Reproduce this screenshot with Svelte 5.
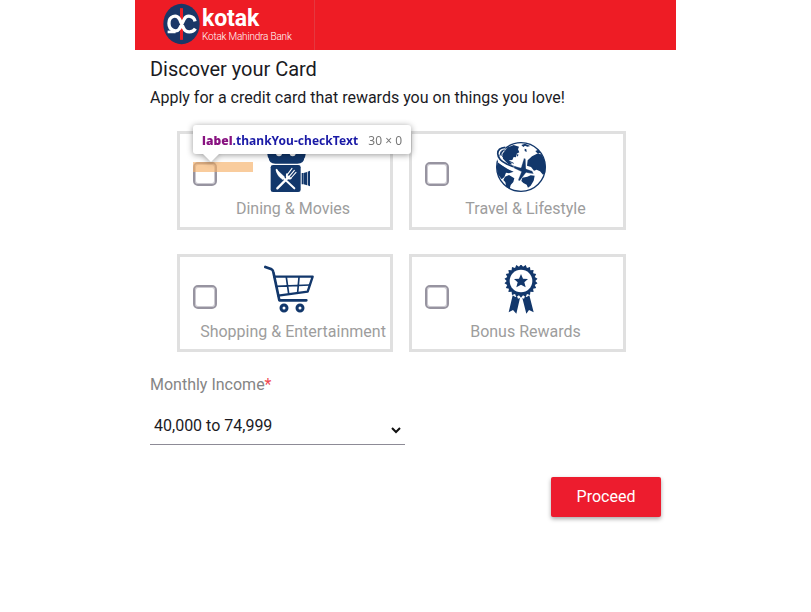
<script>
  const cards = [
    { id: 'dining', label: 'Dining & Movies' },
    { id: 'travel', label: 'Travel & Lifestyle' },
    { id: 'shopping', label: 'Shopping & Entertainment' },
    { id: 'bonus', label: 'Bonus Rewards' }
  ];
  // Scalloped edge of the rosette
  const rosette = Array.from({ length: 44 }, (_, i) => {
    const r = i % 2 ? 43 : 50;
    const a = (i * Math.PI) / 22 - Math.PI / 2;
    return `${(75 + r * Math.cos(a)).toFixed(1)},${(48 + r * Math.sin(a)).toFixed(1)}`;
  }).join(' ');
</script>

<div class="page">
  <header>
    <div class="brand">
      <svg class="mark" viewBox="0 0 112 124">
        <ellipse cx="56" cy="62" rx="55" ry="61" fill="#1b3767" />
        <path d="M56 14V110" stroke="#ed1c24" stroke-width="9" />
        <g fill="none" stroke="#fff" stroke-width="10">
          <path d="M97 54C94 36 71 33 64 48L50 76C41 89 18 82 18 60C18 37 41 32 50 47L62 74C69 91 91 88 98 76" />
          <path d="M14 86H38" stroke-width="8" />
        </g>
      </svg>
      <div class="names">
        <span class="name">kotak</span>
        <span class="bank">Kotak Mahindra Bank</span>
      </div>
    </div>
  </header>

  <main>
    <h1>Discover your Card</h1>
    <p class="intro">Apply for a credit card that rewards you on things you love!</p>

    <div class="cards">
      {#each cards as card (card.id)}
        <div class="card">
          <div class="row">
            <span class="check"></span>
            <svg class="icon" viewBox="0 0 150 150" fill="#12376b">
              {#if card.id === 'dining'}
                <circle cx="37" cy="36" r="27" />
                <circle cx="98" cy="36" r="27" />
                <path d="M14 34H121V45Q121 65 100 65H34Q14 65 14 45Z" />
                <circle cx="45" cy="34" r="9" fill="#fff" />
                <circle cx="86" cy="34" r="9" fill="#fff" />
                <rect x="20" y="69" width="90" height="81" rx="7" />
                <path d="M113 93h5v34h-5zM119 93L129 90V130L119 127ZM131 89L138 86V133L131 130Z" />
                <g stroke="#fff" fill="none" stroke-linecap="round">
                  <path d="M38 84C42 96 50 102 58 108L91 139" stroke-width="6" />
                  <path d="M37 82L62 105L56 113C44 105 36 94 37 82Z" fill="#fff" stroke-width="1" />
                  <path d="M40 139L75 104" stroke-width="7" />
                  <path d="M70 98L84 79M76 103L91 85M81 108L96 91" stroke-width="3.2" />
                  <path d="M69 97Q66 112 80 109" stroke-width="6" />
                </g>
              {:else if card.id === 'travel'}
                <circle cx="75" cy="75" r="73" fill="#fff" stroke="#12376b" stroke-width="4" />
                <path d="M19 36L35 16L53 9L69 14L66 22L70 31L62 35L60 46L53 45L49 54L39 55L48 67L39 69L21 50Z" />
                <path d="M5 61L20 71L35 81L53 89L39 94L30 92L25 105L17 112L5 96L2 76Z" />
                <path d="M27 104L39 99L55 109L52 120L44 129L41 141L31 135L28 121L22 114Z" />
                <path d="M94 104L104 100L116 101L113 116L104 131L96 137L92 128L82 123L76 117L79 107Z" />
                <path d="M95 55L108 43L123 35L136 37L145 53L149 74L147 94L141 98L132 88L122 83L114 86L105 75L93 71Z" />
                <path d="M76 9L87 5L103 12L94 14L87 11L82 15ZM86 20l5 2 1 8-6-3zM118 27l9-4 6 9-7 4zM61 36l7 2-4 6z" />
                <path d="M28 18C-4 20 -6 64 47 75L66 80" fill="none" stroke="#fff" stroke-width="10" />
                <path d="M28 16C-2 18 -4 48 32 66Q45 72 60 76" fill="none" stroke="#12376b" stroke-width="5" />
                <path d="M28 24C12 23 10 35 22 45Q34 57 53 64" fill="none" stroke="#12376b" stroke-width="3" />
                <path d="M53 72L75 77L84 48L89 51L90 80L109 87L113 96L90 92L71 117L66 115L76 89L54 79Z" stroke="#fff" stroke-width="1" />
              {:else if card.id === 'shopping'}
                <g fill="none" stroke="#12376b" stroke-linecap="round" stroke-linejoin="round">
                  <path d="M4 6L23 13Q27 15 28 21L46 106H127" stroke-width="8" />
                  <path d="M31 35H146L131 80L43 92" stroke-width="7" />
                  <path d="M36 64L137 60M67 37L74 86M105 37L101 82" stroke-width="5" />
                  <circle cx="60" cy="129" r="9" stroke-width="9" />
                  <circle cx="108" cy="129" r="9" stroke-width="9" />
                </g>
              {:else}
                <polygon points={rosette} />
                <circle cx="75" cy="48" r="34" fill="#fff" />
                <path d="M75 27L81 41L96 42L85 52L89 67L75 59L61 67L65 52L54 42L69 41Z" />
                <path d="M50 91L58 96L63 94L66 101L72 99L61 146L51 135L38 142Z" />
                <path d="M100 91L92 96L87 94L84 101L79 99L91 146L99 135L113 142Z" />
              {/if}
            </svg>
          </div>
          <div class="caption">{card.label}</div>
        </div>
      {/each}
    </div>

    <div class="field-label">Monthly Income<span>*</span></div>
    <div class="select">
      <span>40,000 to 74,999</span>
      <svg viewBox="0 0 10 7"><path d="M1 1L5 5L9 1" fill="none" stroke="#111" stroke-width="2" /></svg>
    </div>
    <div class="actions"><button>Proceed</button></div>
  </main>

  <div class="highlight"></div>
  <div class="tooltip">
    <span class="selector"><b>label</b>.thankYou-checkText</span>
    <span class="size">30 × 0</span>
  </div>
</div>

<style>
  :global(body) { background: #fff; }
  .page {
    position: relative;
    width: 811px;
    height: 612px;
    overflow: hidden;
    font-family: Roboto, sans-serif;
    font-size: 16px;
    color: #1b1b1f;
  }
  header {
    width: 541px;
    height: 50px;
    margin-left: 135px;
    background: #ee1c25;
  }
  .brand {
    box-sizing: border-box;
    display: flex;
    width: 180px;
    height: 50px;
    padding: 3px 0 0 28px;
    border-right: 1px solid #e5383f;
  }
  .mark { width: 37px; height: 42px; flex: none; }
  .names {
    display: flex;
    flex-direction: column;
    margin-left: 2px;
    color: #fff;
    white-space: nowrap;
  }
  .name {
    margin-top: 3px;
    font: 700 23px/26px Roboto, sans-serif;
    letter-spacing: -0.1px;
  }
  .bank {
    font: 300 10px/10px Roboto, sans-serif;
    letter-spacing: -0.2px;
  }
  main { width: 511px; margin-left: 150px; }
  h1 {
    margin: 0;
    padding-top: 7px;
    font-size: 20px;
    font-weight: 400;
    line-height: 24px;
    letter-spacing: -0.02px;
  }
  .intro { margin: 7px 0 0; line-height: 20px; white-space: nowrap; }
  .cards {
    display: grid;
    grid-template: 99px 98px / 216px 217px;
    gap: 24px 16px;
    margin: 23px 0 0 27px;
  }
  .card { box-sizing: border-box; border: 3px solid #e0e0e0; }
  .row { display: flex; height: 58px; }
  .check {
    box-sizing: border-box;
    width: 24px;
    height: 24px;
    margin: 28px 47px 0 13px;
    border: 2px solid #9794a0;
    border-radius: 5px;
    box-shadow: inset 0 0 0 1px #cbc9d0;
  }
  .icon { width: 50px; height: 50px; margin-top: 8px; }
  .caption {
    padding-left: 16px;
    margin-top: 7px;
    line-height: 20px;
    text-align: center;
    white-space: nowrap;
    color: #9d9d9d;
  }
  .field-label { margin-top: 23px; line-height: 20px; color: #858585; }
  .field-label span { color: #f04850; }
  .select {
    box-sizing: border-box;
    display: flex;
    justify-content: space-between;
    width: 255px;
    height: 40px;
    margin-top: 10px;
    padding: 11px 4px 0;
    border-bottom: 1px solid #8d8b96;
    line-height: 20px;
  }
  .select svg { width: 10px; height: 7px; margin-top: 11px; }
  .actions { display: flex; justify-content: flex-end; margin-top: 32px; }
  button {
    width: 110px;
    height: 40px;
    padding: 0 0 1px;
    border: 0;
    border-radius: 2px;
    background: #ed1c2e;
    color: #fff;
    font: 400 16px Roboto, sans-serif;
    box-shadow: 0 2px 4px rgba(0, 0, 0, 0.35);
  }
  .highlight {
    position: absolute;
    left: 193px;
    top: 162px;
    width: 60px;
    height: 10px;
    background: rgba(246, 178, 107, 0.66);
  }
  .tooltip {
    position: absolute;
    left: 193px;
    top: 125px;
    box-sizing: border-box;
    display: flex;
    justify-content: space-between;
    width: 218px;
    height: 29px;
    padding: 0 9px;
    border-radius: 3px;
    background: #fff;
    font: 12px/31px "Noto Sans", sans-serif;
    white-space: nowrap;
    filter: drop-shadow(0 1px 3px rgba(0, 0, 0, 0.4));
  }
  .tooltip::after {
    content: "";
    position: absolute;
    left: 10px;
    top: 29px;
    border: solid transparent;
    border-width: 8px 8px 0;
    border-top-color: #fff;
  }
  .selector { font-weight: 700; letter-spacing: 0.04px; color: #1a1aa6; }
  .selector b { color: #881280; }
  .size { color: #777; }
</style>
